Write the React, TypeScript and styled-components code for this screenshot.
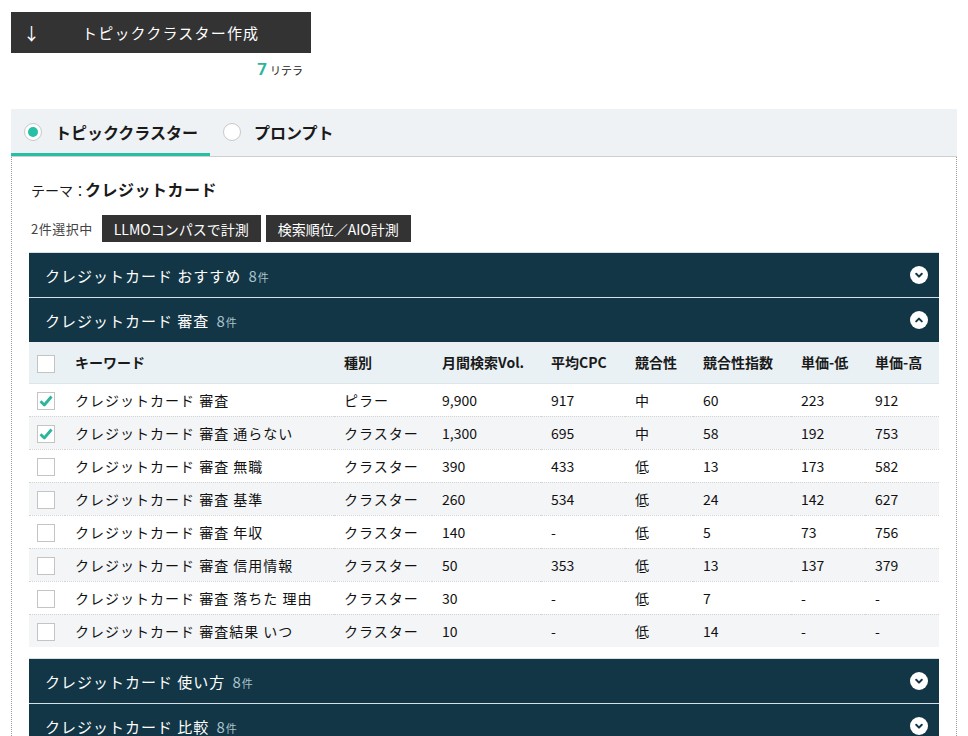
import React from "react";
import styled, { createGlobalStyle } from "styled-components";

const GlobalStyle = createGlobalStyle`
  html, body { margin: 0; padding: 0; background: #fff; }
  body {
    font-family: "Noto Sans CJK JP", "Noto Sans", sans-serif;
    color: #1a1a1a;
  }
`;

const Page = styled.div`
  padding: 12px 11px 0 11px;
  width: 946px;
`;

const CreateBlock = styled.div`
  width: 300px;
`;

const CreateButton = styled.button`
  width: 300px;
  height: 41px;
  background: #333;
  color: #fff;
  border: none;
  display: flex;
  align-items: center;
  padding: 0 0 0 12px;
  font-family: inherit;
  font-size: 15px;
  cursor: pointer;
`;

const Arrow = styled.span`
  width: 59px;
  text-align: left;
  font-size: 17px;
`;

const ButtonLabel = styled.span`
  text-align: left;
  letter-spacing: 1.2px;
`;

const CreditLine = styled.div`
  padding-right: 8px;
  margin-top: 6px;
  height: 22px;
  display: flex;
  justify-content: flex-end;
  align-items: baseline;
  gap: 3px;
`;

const CreditNum = styled.span`
  font-family: "Roboto", "Noto Sans", sans-serif;
  color: #2cb59c;
  font-weight: 700;
  font-size: 17px;
`;

const CreditUnit = styled.span`
  font-size: 11px;
  color: #222;
`;

const TabBar = styled.div`
  margin-top: 28px;
  height: 47px;
  background: #eff2f5;
  border-bottom: 1px solid #cfcfcf;
  display: flex;
`;

const Tab = styled.div<{ $active?: boolean }>`
  display: flex;
  align-items: center;
  gap: 13px;
  padding: 2px 12px 0 13px;
  height: 47px;
  box-sizing: border-box;
  border-bottom: 3px solid ${(p) => (p.$active ? "#27c0a4" : "transparent")};
  margin-bottom: -1px;
  width: ${(p) => (p.$active ? "199px" : "auto")};
  white-space: nowrap;
  font-weight: 700;
  font-size: 16px;
  letter-spacing: 0;
`;

const Radio = styled.span<{ $on?: boolean }>`
  flex: none;
  width: 16px;
  height: 16px;
  border-radius: 50%;
  border: 1px solid #c8c8c8;
  background: #fff;
  display: inline-flex;
  align-items: center;
  justify-content: center;
  &::after {
    content: "";
    width: 10px;
    height: 10px;
    border-radius: 50%;
    background: ${(p) => (p.$on ? "#27c0a4" : "transparent")};
  }
`;

const Panel = styled.div`
  border-left: 1px dotted #9a9a9a;
  border-right: 1px dotted #9a9a9a;
  padding: 20px 17px 0 17px;
`;

const Theme = styled.div`
  font-size: 14px;
  display: flex;
  align-items: baseline;
  height: 22px;
  padding-left: 2px;
`;

const ThemeValue = styled.span`
  font-weight: 700;
  font-size: 16px;
  letter-spacing: 0.5px;
  margin-left: -2px;
`;

const SelectRow = styled.div`
  margin-top: 16px;
  display: flex;
  align-items: center;
  gap: 5px;
`;

const SelectCount = styled.span`
  font-size: 13px;
  color: #444;
  letter-spacing: 0.5px;
  padding-left: 2px;
  margin-right: 4px;
`;

const DarkButton = styled.button`
  height: 27px;
  background: #333;
  color: #fff;
  border: none;
  font-family: inherit;
  font-size: 14px;
  padding: 0 12px;
  cursor: pointer;
`;

const Accordion = styled.div`
  margin-top: 10px;
`;

const Item = styled.div<{ $gap?: boolean }>`
  margin-top: ${(p) => (p.$gap ? "11px" : "0")};
`;

const Header = styled.div`
  height: 44px;
  border-top: 1px solid #d5e1e7;
  background: #123645;
  color: #fff;
  display: flex;
  align-items: center;
  justify-content: space-between;
  padding: 0 11px 0 16px;
`;

const HeaderTitle = styled.div`
  font-size: 15px;
  letter-spacing: 1px;
  display: flex;
  align-items: baseline;
`;

const Count = styled.span`
  color: #a8c3cf;
  margin-left: 7px;
  font-size: 15px;
  letter-spacing: 0;
`;

const CountUnit = styled.span`
  font-size: 11px;
  margin-left: 1px;
`;

const Chevron = styled.span`
  width: 18px;
  height: 18px;
  border-radius: 50%;
  background: #fff;
  display: inline-flex;
  align-items: center;
  justify-content: center;
`;

const Table = styled.table`
  width: 910px;
  border-collapse: collapse;
  table-layout: fixed;
  font-size: 14px;
`;

const HeadRow = styled.tr`
  background: #e9f1f4;
  height: 41px;
  border-bottom: 1px solid #dce6ea;
`;

const Th = styled.th`
  text-align: left;
  font-weight: 700;
  padding: 0 0 0 10px;
  font-size: 14px;
  white-space: nowrap;
`;

const Row = styled.tr<{ $alt?: boolean }>`
  height: 33px;
  background: ${(p) => (p.$alt ? "#f4f5f7" : "#fff")};
  border-bottom: 1px dotted #d4d4d4;
  &:last-child { border-bottom: none; }
`;

const Td = styled.td<{ $kw?: boolean }>`
  padding: 0 0 0 10px;
  letter-spacing: ${(p) => (p.$kw ? "1px" : "0")};
  white-space: nowrap;
  color: #111;
`;

const CheckCell = styled.td`
  padding: 0 0 0 8px;
`;

const CheckTh = styled.th`
  padding: 0 0 0 8px;
  text-align: left;
`;

const Box = styled.span`
  width: 16px;
  height: 16px;
  border: 1px solid #c4c4c4;
  background: #fff;
  display: inline-flex;
  align-items: center;
  justify-content: center;
  vertical-align: middle;
`;

const ChevronIcon = ({ up }: { up?: boolean }) => (
  <Chevron>
    <svg width="10" height="10" viewBox="0 0 10 10">
      <path
        d={up ? "M2.2 6.4 L5 3.6 L7.8 6.4" : "M2.2 3.8 L5 6.6 L7.8 3.8"}
        fill="none"
        stroke="#123645"
        strokeWidth="2"
        strokeLinecap="round"
        strokeLinejoin="round"
      />
    </svg>
  </Chevron>
);

const Check = ({ on }: { on?: boolean }) => (
  <Box>
    {on && (
      <svg width="16" height="16" viewBox="0 0 16 16">
        <path
          d="M2.5 8.2 L6.3 12 L13.5 3.5"
          fill="none"
          stroke="#2bb59a"
          strokeWidth="2.8"
          strokeLinejoin="round"
        />
      </svg>
    )}
  </Box>
);

type RowData = {
  kw: string;
  type: string;
  vol: string;
  cpc: string;
  comp: string;
  idx: string;
  low: string;
  high: string;
  checked?: boolean;
};

const rows: RowData[] = [
  { kw: "クレジットカード 審査", type: "ピラー", vol: "9,900", cpc: "917", comp: "中", idx: "60", low: "223", high: "912", checked: true },
  { kw: "クレジットカード 審査 通らない", type: "クラスター", vol: "1,300", cpc: "695", comp: "中", idx: "58", low: "192", high: "753", checked: true },
  { kw: "クレジットカード 審査 無職", type: "クラスター", vol: "390", cpc: "433", comp: "低", idx: "13", low: "173", high: "582" },
  { kw: "クレジットカード 審査 基準", type: "クラスター", vol: "260", cpc: "534", comp: "低", idx: "24", low: "142", high: "627" },
  { kw: "クレジットカード 審査 年収", type: "クラスター", vol: "140", cpc: "-", comp: "低", idx: "5", low: "73", high: "756" },
  { kw: "クレジットカード 審査 信用情報", type: "クラスター", vol: "50", cpc: "353", comp: "低", idx: "13", low: "137", high: "379" },
  { kw: "クレジットカード 審査 落ちた 理由", type: "クラスター", vol: "30", cpc: "-", comp: "低", idx: "7", low: "-", high: "-" },
  { kw: "クレジットカード 審査結果 いつ", type: "クラスター", vol: "10", cpc: "-", comp: "低", idx: "14", low: "-", high: "-" },
];

const cols = [36, 269, 98, 109, 84, 68, 98, 74, 74];

const groups = [
  { title: "クレジットカード おすすめ", open: false },
  { title: "クレジットカード 審査", open: true },
  { title: "クレジットカード 使い方", open: false },
  { title: "クレジットカード 比較", open: false },
];

export default function App() {
  return (
    <>
      <GlobalStyle />
      <Page>
        <CreateBlock>
          <CreateButton>
            <Arrow>↓</Arrow>
            <ButtonLabel>トピッククラスター作成</ButtonLabel>
          </CreateButton>
          <CreditLine>
            <CreditNum>7</CreditNum>
            <CreditUnit>リテラ</CreditUnit>
          </CreditLine>
        </CreateBlock>

        <TabBar>
          <Tab $active>
            <Radio $on />
            トピッククラスター
          </Tab>
          <Tab>
            <Radio />
            プロンプト
          </Tab>
        </TabBar>

        <Panel>
          <Theme>
            テーマ：<ThemeValue>クレジットカード</ThemeValue>
          </Theme>
          <SelectRow>
            <SelectCount>2件選択中</SelectCount>
            <DarkButton>LLMOコンパスで計測</DarkButton>
            <DarkButton>検索順位／AIO計測</DarkButton>
          </SelectRow>

          <Accordion>
            {groups.map((g, gi) => (
              <Item key={g.title} $gap={gi === 2}>
                <Header>
                  <HeaderTitle>
                    {g.title}
                    <Count>
                      8<CountUnit>件</CountUnit>
                    </Count>
                  </HeaderTitle>
                  <ChevronIcon up={g.open} />
                </Header>
                {g.open && (
                  <Table>
                    <colgroup>
                      {cols.map((w, i) => (
                        <col key={i} style={{ width: w }} />
                      ))}
                    </colgroup>
                    <thead>
                      <HeadRow>
                        <CheckTh>
                          <Check />
                        </CheckTh>
                        <Th>キーワード</Th>
                        <Th>種別</Th>
                        <Th>月間検索Vol.</Th>
                        <Th>平均CPC</Th>
                        <Th>競合性</Th>
                        <Th>競合性指数</Th>
                        <Th>単価-低</Th>
                        <Th>単価-高</Th>
                      </HeadRow>
                    </thead>
                    <tbody>
                      {rows.map((r, i) => (
                        <Row key={r.kw} $alt={i % 2 === 1}>
                          <CheckCell>
                            <Check on={r.checked} />
                          </CheckCell>
                          <Td $kw>{r.kw}</Td>
                          <Td $kw>{r.type}</Td>
                          <Td>{r.vol}</Td>
                          <Td>{r.cpc}</Td>
                          <Td>{r.comp}</Td>
                          <Td>{r.idx}</Td>
                          <Td>{r.low}</Td>
                          <Td>{r.high}</Td>
                        </Row>
                      ))}
                    </tbody>
                  </Table>
                )}
              </Item>
            ))}
          </Accordion>
        </Panel>
      </Page>
    </>
  );
}
